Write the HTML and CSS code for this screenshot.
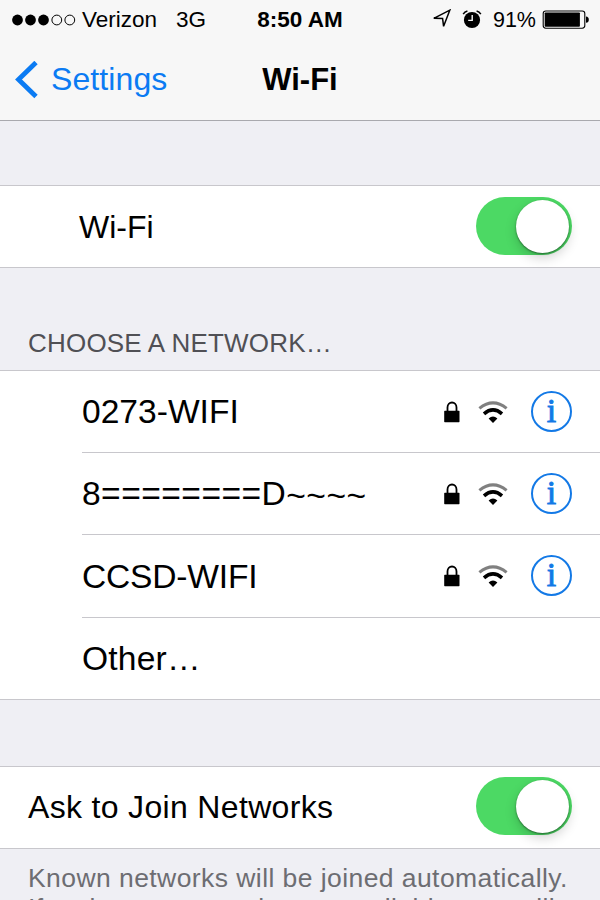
FILE: index.html
```html
<!DOCTYPE html>
<html lang="en">
<head>
    <meta charset="UTF-8">
    <meta name="viewport" content="width=device-width, initial-scale=1.0">
    <title>Wi-Fi</title>
    <link rel="stylesheet" href="styles.css">
</head>
<body>
    <!-- shared icons -->
    <svg class="defs">
        <symbol id="lock" viewBox="0 0 16 22">
            <path d="M3.5 11V6.5a4.5 5 0 0 1 9 0V11" fill="none" stroke="#000" stroke-width="1.8"/>
            <rect x="0.2" y="9.8" width="15.3" height="11.4" rx="0.6"/>
        </symbol>
        <symbol id="wifi" viewBox="0 0 30 22">
            <path d="M1.4 7.4Q15 -3.6 28.6 7.4" fill="none" stroke="#808080" stroke-width="3.1"/>
            <path d="M6 12.8Q15 5 24 12.8" fill="none" stroke="#000" stroke-width="3.6"/>
            <path d="M10.6 17.6Q15 13.2 19.4 17.6L15 22Z"/>
        </symbol>
    </svg>

    <header class="header">
        <div class="status">
            <div class="status-left">
                <svg width="64" height="12" viewBox="0 0 64 12">
                    <circle cx="5.5" cy="6" r="5.4"/>
                    <circle cx="18.5" cy="6" r="5.4"/>
                    <circle cx="31.5" cy="6" r="5.4"/>
                    <circle cx="44.8" cy="6" r="4.9" fill="none" stroke="#000"/>
                    <circle cx="57.8" cy="6" r="4.9" fill="none" stroke="#000"/>
                </svg>
                <span class="carrier">Verizon</span>
                <span>3G</span>
            </div>
            <div class="time">8:50 AM</div>
            <div class="status-right">
                <svg class="location" width="20" height="20" viewBox="0 0 20 20">
                    <path d="M1.8 9.3L17.8 1.2L11.6 17.3L10.6 9.6Z" fill="none" stroke="#000" stroke-width="1.5"/>
                </svg>
                <svg class="alarm" width="20" height="20" viewBox="0 0 20 20">
                    <circle cx="10" cy="10" r="8.1"/>
                    <path d="M1.2 4.2Q2.6 1.6 5.4 0.9M14.6 0.9Q17.4 1.6 18.8 4.2" fill="none" stroke="#000" stroke-width="1.5"/>
                    <path d="M10.2 5V10.4H6.2" fill="none" stroke="#f7f7f7" stroke-width="1.4"/>
                </svg>
                <span class="percent">91%</span>
                <svg width="48" height="20" viewBox="0 0 48 20">
                    <rect x="1.2" y="1" width="41.6" height="17.2" rx="2.6" fill="none" stroke="#000" stroke-width="1.1"/>
                    <rect x="2.7" y="2.5" width="35.2" height="14.2" rx="0.8"/>
                    <path d="M44 6.6Q46.8 6.8 46.8 9.7Q46.8 12.6 44 12.8Z"/>
                </svg>
            </div>
        </div>
        <nav class="nav">
            <a class="back">
                <svg width="24" height="38" viewBox="0 0 24 38">
                    <path d="M22 1.5L4.5 18.5L22 35.5" fill="none" stroke="#0b7bf3" stroke-width="4.8"/>
                </svg>
                <span>Settings</span>
            </a>
            <h1 class="title">Wi-Fi</h1>
        </nav>
    </header>

    <section class="group wifi-group">
        <div class="row">
            <span class="label wifi-label">Wi-Fi</span>
            <span class="switch"><span class="knob"></span></span>
        </div>
    </section>

    <h2 class="section-title">CHOOSE A NETWORK…</h2>
    <section class="group networks">
        <div class="row network">
            <span class="name">0273-WIFI</span>
            <svg class="lock"><use href="#lock"/></svg>
            <svg class="signal"><use href="#wifi"/></svg>
            <span class="info">i</span>
        </div>
        <div class="row network">
            <span class="name wide">8========D<span class="tilde">~~~~</span></span>
            <svg class="lock"><use href="#lock"/></svg>
            <svg class="signal"><use href="#wifi"/></svg>
            <span class="info">i</span>
        </div>
        <div class="row network">
            <span class="name tight">CCSD-WIFI</span>
            <svg class="lock"><use href="#lock"/></svg>
            <svg class="signal"><use href="#wifi"/></svg>
            <span class="info">i</span>
        </div>
        <div class="row network">
            <span class="name other">Other…</span>
        </div>
    </section>

    <section class="group ask-group">
        <div class="row">
            <span class="label ask-label">Ask to Join Networks</span>
            <span class="switch"><span class="knob"></span></span>
        </div>
    </section>
    <p class="note">Known networks will be joined automatically.<br>If no known networks are available, you will</p>
</body>
</html>
```

FILE: styles.css
```css
* {
    box-sizing: border-box;
}
body {
    margin: 0;
    width: 600px;
    height: 900px;
    overflow: hidden;
    background-color: #efeff4;
    color: #000;
    font-family: "Liberation Sans", Arial, sans-serif;
}
svg {
    display: block;
    flex-shrink: 0;
}
.defs {
    position: absolute;
    width: 0;
    height: 0;
}
.header {
    height: 121px;
    background-color: #f7f7f7;
    border-bottom: 1px solid #a9a9ae;
}
.status {
    display: grid;
    grid-template-columns: 1fr auto 1fr;
    align-items: center;
    height: 40px;
    padding: 0 10px 0 12px;
    font-size: 22.5px;
}
.status-left,
.status-right {
    display: flex;
    align-items: center;
}
.status-right {
    justify-content: flex-end;
}
.carrier {
    margin: 0 19px 0 6px;
}
.time {
    margin-right: 2px;
    font-weight: bold;
}
.location {
    margin: -2px 10px 0 0;
}
.alarm {
    margin: -1px 11px 0 0;
}
.percent {
    margin-right: 6px;
    font-size: 21.5px;
}
.nav {
    display: grid;
    grid-template-columns: 1fr auto 1fr;
    align-items: center;
    height: 79px;
}
.back {
    display: flex;
    align-items: center;
    gap: 13px;
    padding-left: 14px;
    font-size: 32px;
    letter-spacing: 0.1px;
    color: #0b7bf3;
}
.title {
    margin: 0;
    font-size: 31px;
}
.group {
    background-color: #fff;
    border-top: 1px solid #c8c7cc;
    border-bottom: 1px solid #c8c7cc;
}
.row {
    display: flex;
    align-items: center;
    height: 81px;
    padding: 0 28px;
}
.wifi-group {
    margin-top: 64px;
}
.label {
    flex: 1;
    font-size: 32px;
}
.wifi-label {
    padding: 1px 0 0 51px;
}
.ask-label {
    letter-spacing: 0.33px;
}
.switch {
    display: flex;
    justify-content: flex-end;
    width: 96px;
    height: 58px;
    margin-bottom: 2px;
    padding: 3px 3px 2px;
    border-radius: 29px;
    background-color: #4cd964;
}
.knob {
    width: 53px;
    height: 53px;
    border-radius: 50%;
    background-color: #fff;
    box-shadow: 0 1px 2px rgba(0, 0, 0, 0.45), 0 5px 12px rgba(0, 0, 0, 0.18);
}
.section-title {
    margin: 0;
    padding: 60px 28px 0;
    height: 102px;
    font-size: 26px;
    font-weight: normal;
    line-height: 30px;
    letter-spacing: 0.2px;
    color: #505055;
}
.network {
    height: 82.2px;
    margin-left: 82px;
    padding-left: 0;
    border-bottom: 1px solid #c8c7cc;
}
.network:last-child {
    height: 81.4px;
    border-bottom: none;
}
.name {
    flex: 1;
    font-size: 33.6px;
}
.wide {
    letter-spacing: 0.45px;
}
.tilde {
    position: relative;
    top: 2px;
}
.tight {
    padding-top: 2px;
    letter-spacing: -0.2px;
}
.other {
    padding-top: 2px;
    letter-spacing: 0.2px;
}
.lock {
    width: 16px;
    height: 22px;
    margin-right: 18px;
}
.signal {
    width: 30px;
    height: 22px;
    margin-right: 23px;
}
.info {
    width: 41px;
    height: 41px;
    border: 2px solid #1379e6;
    border-radius: 50%;
    font-family: "Liberation Serif", "Times New Roman", serif;
    font-size: 34px;
    line-height: 36px;
    text-align: center;
    color: #1379e6;
    -webkit-text-stroke: 0.9px #1379e6;
}
.ask-group {
    margin-top: 66px;
}
.note {
    margin: 0;
    padding: 14px 28px 0;
    font-size: 26.5px;
    line-height: 30px;
    letter-spacing: 0.43px;
    white-space: nowrap;
    color: #6d6d72;
}
```
